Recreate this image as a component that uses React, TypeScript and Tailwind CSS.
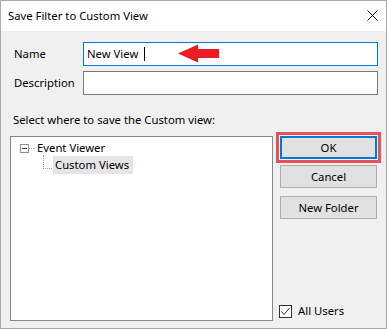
import React from "react";

export default function App() {
  const font = { fontFamily: '"Noto Sans", "Segoe UI", sans-serif' };
  return (
    <div
      className="w-[387px] h-[329px] border border-[#aaaaaa] flex flex-col bg-[#f0f0f0] text-[11.3px] text-black leading-[16px] overflow-hidden whitespace-nowrap"
      style={font}
    >
      <div className="h-[30px] bg-white flex items-center justify-between pl-[7px] pr-[8px] shrink-0">
        <span>Save Filter to Custom View</span>
        <svg width="11" height="11" viewBox="0 0 11 11" className="mb-[1px]">
          <path d="M0.5 0.5 L10.5 10.5 M10.5 0.5 L0.5 10.5" stroke="#000" strokeWidth="1" fill="none" />
        </svg>
      </div>
      <div className="flex-1 flex flex-col pl-[9px] pr-[8px] pt-[11px]">
        <div className="flex items-center h-[24px]">
          <span className="w-[73px] pl-[4px]">Name</span>
          <div className="relative w-[295px] h-[24px] border border-[#0078d7] bg-white flex items-center pl-[3px]">
            <span>New View</span>
            <div className="absolute left-[60px] top-[4px] w-[1px] h-[14px] bg-black" />
            <svg className="absolute left-[94px] top-[1px]" width="41" height="19" viewBox="0 0 41 19">
              <polygon points="0,9.5 20,0.5 20,5 41,5 41,14 20,14 20,18.5" fill="#ed1c24" />
            </svg>
          </div>
        </div>
        <div className="flex items-center h-[24px] mt-[5px]">
          <span className="w-[73px] pl-[4px]">Description</span>
          <div className="w-[295px] h-[24px] border border-[#7a7a7a] bg-white" />
        </div>
        <div className="mt-[17px] pl-[3px]">Select where to save the Custom view:</div>
        <div className="flex mt-[8px]">
          <div className="w-[263px] h-[185px] border border-[#828790] bg-white relative">
            <div className="absolute left-[9px] top-[3px] flex items-center h-[16px]">
              <div className="w-[9px] h-[9px] border border-[#919191] bg-white flex items-center justify-center">
                <div className="w-[5px] h-[1px] bg-[#1e395b]" />
              </div>
              <div className="w-[5px] border-t border-dotted border-[#a0a0a0] mr-[3px]" />
              <span>Event Viewer</span>
            </div>
            <div className="absolute left-[32px] top-[18px] w-[1px] h-[14px] border-l border-dotted border-[#a0a0a0]" />
            <div className="absolute left-[32px] top-[31px] w-[9px] border-t border-dotted border-[#a0a0a0]" />
            <div className="absolute left-[42px] top-[19px] h-[18px] w-[80px] bg-[#e5e5e5] flex items-center pl-[2px]">
              Custom Views
            </div>
          </div>
          <div className="ml-[7px] w-[97px] flex flex-col">
            <div className="relative">
              <div className="h-[23px] border-2 border-[#0078d7] bg-[#e1e1e1] flex items-center justify-center">OK</div>
              <div className="absolute left-[-4px] right-[-4px] top-[-4px] bottom-[-4px] border-[3px] border-[#e8505b]" />
            </div>
            <div className="mt-[6px] h-[23px] border border-[#adadad] bg-[#e1e1e1] flex items-center justify-center">Cancel</div>
            <div className="mt-[8px] h-[23px] border border-[#adadad] bg-[#e1e1e1] flex items-center justify-center">New Folder</div>
            <div className="mt-auto mb-[2px] flex items-center ml-[-1px]">
              <div className="w-[13px] h-[13px] border border-[#333333] bg-white flex items-center justify-center">
                <svg width="11" height="11" viewBox="0 0 11 11">
                  <path d="M1.5 5.5 L4 8.5 L9.5 2" stroke="#333" strokeWidth="1" fill="none" />
                </svg>
              </div>
              <span className="ml-[6px]">All Users</span>
            </div>
          </div>
        </div>
      </div>
    </div>
  );
}
